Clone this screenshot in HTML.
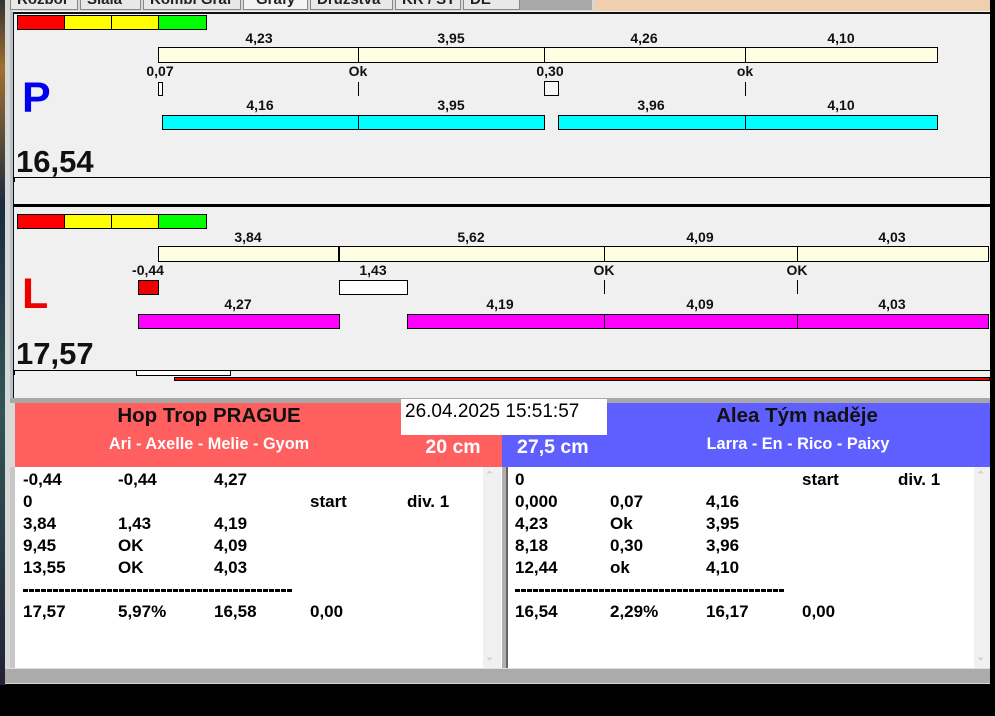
<!DOCTYPE html>
<html><head><meta charset="utf-8"><style>
*{margin:0;padding:0;box-sizing:border-box}
body{width:995px;height:716px;background:#000;position:relative;overflow:hidden;font-family:"Liberation Sans",Arial,sans-serif}
.a{position:absolute}
.t{position:absolute;font-weight:bold;font-size:14px;color:#111;transform:translateX(-50%);white-space:nowrap;line-height:14px}
.tab{position:absolute;top:0;height:10px;background:#e8e8e8;border:1px solid #888;border-top:none;overflow:hidden}
.tab span{position:absolute;top:-9px;left:6px;font-weight:bold;font-size:15px;color:#222;white-space:nowrap}
.bx{position:absolute;border:1px solid #000}
.l{position:absolute;font-weight:bold;font-size:17px;color:#000;line-height:20px;white-space:nowrap}
.d{position:absolute;height:3px;background:repeating-linear-gradient(90deg,#000 0 5px,transparent 5px 6px)}
</style></head><body>
<div class="a" style="left:0;top:0;width:6px;height:685px;background:linear-gradient(#333,#a07030 10%,#1a2a40 30%,#355 60%,#223)"></div>
<div class="a" style="left:5px;top:0;width:985px;height:684px;background:#d8d8d8"></div>
<!-- tabs -->
<div class="a" style="left:595px;top:0;width:395px;height:11px;background:#f0cfae"></div>
<div class="a" style="left:520px;top:0;width:72px;height:10px;background:#a8a8a8"></div>
<div class="tab" style="left:10px;width:68px"><span>Rozbor</span></div>
<div class="tab" style="left:80px;width:61px"><span>Síala</span></div>
<div class="tab" style="left:143px;width:98px"><span>Kombi Graf</span></div>
<div class="tab" style="left:243px;width:65px;background:#f4f4f4"><span style="left:12px">Grafy</span></div>
<div class="tab" style="left:310px;width:83px"><span>Družstva</span></div>
<div class="tab" style="left:395px;width:66px"><span>KR / ST</span></div>
<div class="tab" style="left:463px;width:57px"><span>DE</span></div>
<!-- main graph area -->
<div class="a" style="left:10px;top:11px;width:980px;height:390px;background:#f0f0f0;border-left:3px solid #b8c0c8"></div>
<div class="a" style="left:13px;top:12px;width:977px;height:2px;background:#111"></div>
<div class="a" style="left:13px;top:12px;width:1px;height:388px;background:#111"></div>

<!-- P panel -->
<div class="bx" style="left:17px;top:15px;width:48px;height:15px;background:#f00"></div>
<div class="bx" style="left:64px;top:15px;width:48px;height:15px;background:#ff0"></div>
<div class="bx" style="left:111px;top:15px;width:48px;height:15px;background:#ff0"></div>
<div class="bx" style="left:158px;top:15px;width:49px;height:15px;background:#0f0"></div>
<div class="t" style="left:259px;top:31px">4,23</div>
<div class="t" style="left:451px;top:31px">3,95</div>
<div class="t" style="left:644px;top:31px">4,26</div>
<div class="t" style="left:841px;top:31px">4,10</div>
<div class="bx" style="left:158px;top:47px;width:780px;height:16px;background:#fefee2"></div>
<div class="a" style="left:358px;top:47px;width:1px;height:16px;background:#000"></div>
<div class="a" style="left:544px;top:47px;width:1px;height:16px;background:#000"></div>
<div class="a" style="left:745px;top:47px;width:1px;height:16px;background:#000"></div>
<div class="t" style="left:160px;top:64px">0,07</div>
<div class="t" style="left:358px;top:64px">Ok</div>
<div class="t" style="left:550px;top:64px">0,30</div>
<div class="t" style="left:745px;top:64px">ok</div>
<div class="bx" style="left:158px;top:82px;width:5px;height:14px;background:#fff"></div>
<div class="a" style="left:358px;top:82px;width:1px;height:14px;background:#000"></div>
<div class="bx" style="left:544px;top:81px;width:15px;height:15px;background:#f8f8f8"></div>
<div class="a" style="left:745px;top:82px;width:1px;height:14px;background:#000"></div>
<div class="t" style="left:260px;top:98px">4,16</div>
<div class="t" style="left:451px;top:98px">3,95</div>
<div class="t" style="left:651px;top:98px">3,96</div>
<div class="t" style="left:841px;top:98px">4,10</div>
<div class="bx" style="left:162px;top:115px;width:383px;height:15px;background:#0ff"></div>
<div class="a" style="left:358px;top:115px;width:1px;height:15px;background:#000"></div>
<div class="bx" style="left:558px;top:115px;width:380px;height:15px;background:#0ff"></div>
<div class="a" style="left:745px;top:115px;width:1px;height:15px;background:#000"></div>
<div class="a" style="left:22px;top:76px;font-size:43px;font-weight:bold;color:#00e;line-height:44px">P</div>
<div class="a" style="left:16px;top:145px;font-size:31px;font-weight:bold;color:#111;line-height:34px">16,54</div>
<div class="a" style="left:13px;top:177px;width:977px;height:1px;background:#000"></div>
<div class="a" style="left:14px;top:177px;width:1px;height:5px;background:#000"></div>
<div class="a" style="left:13px;top:204px;width:977px;height:3px;background:#000"></div>

<!-- L panel -->
<div class="bx" style="left:17px;top:214px;width:48px;height:15px;background:#f00"></div>
<div class="bx" style="left:64px;top:214px;width:48px;height:15px;background:#ff0"></div>
<div class="bx" style="left:111px;top:214px;width:48px;height:15px;background:#ff0"></div>
<div class="bx" style="left:158px;top:214px;width:49px;height:15px;background:#0f0"></div>
<div class="t" style="left:248px;top:230px">3,84</div>
<div class="t" style="left:471px;top:230px">5,62</div>
<div class="t" style="left:700px;top:230px">4,09</div>
<div class="t" style="left:892px;top:230px">4,03</div>
<div class="bx" style="left:158px;top:246px;width:831px;height:16px;background:#fefee2"></div>
<div class="a" style="left:338px;top:246px;width:2px;height:16px;background:#000"></div>
<div class="a" style="left:604px;top:246px;width:1px;height:16px;background:#000"></div>
<div class="a" style="left:797px;top:246px;width:1px;height:16px;background:#000"></div>
<div class="t" style="left:148px;top:263px">-0,44</div>
<div class="t" style="left:373px;top:263px">1,43</div>
<div class="t" style="left:604px;top:263px">OK</div>
<div class="t" style="left:797px;top:263px">OK</div>
<div class="bx" style="left:138px;top:280px;width:21px;height:15px;background:#e00"></div>
<div class="bx" style="left:339px;top:280px;width:69px;height:15px;background:#fff"></div>
<div class="a" style="left:604px;top:280px;width:1px;height:14px;background:#000"></div>
<div class="a" style="left:797px;top:280px;width:1px;height:14px;background:#000"></div>
<div class="t" style="left:238px;top:297px">4,27</div>
<div class="t" style="left:500px;top:297px">4,19</div>
<div class="t" style="left:700px;top:297px">4,09</div>
<div class="t" style="left:892px;top:297px">4,03</div>
<div class="bx" style="left:138px;top:314px;width:202px;height:15px;background:#f0f"></div>
<div class="bx" style="left:407px;top:314px;width:582px;height:15px;background:#f0f"></div>
<div class="a" style="left:604px;top:314px;width:1px;height:15px;background:#000"></div>
<div class="a" style="left:797px;top:314px;width:1px;height:15px;background:#000"></div>
<div class="a" style="left:22px;top:272px;font-size:43px;font-weight:bold;color:#e00;line-height:44px">L</div>
<div class="a" style="left:16px;top:337px;font-size:31px;font-weight:bold;color:#111;line-height:34px">17,57</div>
<div class="a" style="left:13px;top:370px;width:977px;height:1px;background:#000"></div>
<div class="a" style="left:14px;top:370px;width:1px;height:5px;background:#000"></div>
<div class="bx" style="left:136px;top:370px;width:95px;height:6px;background:#fff"></div>
<div class="bx" style="left:174px;top:377px;width:816px;height:4px;background:#e00"></div>

<!-- headers -->
<div class="a" style="left:10px;top:398px;width:980px;height:5px;background:#a8a8a8"></div>
<div class="a" style="left:15px;top:403px;width:487px;height:64px;background:#ff5f5f"></div>
<div class="a" style="left:502px;top:403px;width:488px;height:64px;background:#5f5fff"></div>
<div class="a" style="left:401px;top:399px;width:206px;height:36px;background:#fff"></div>
<div class="a" style="left:405px;top:401px;font-size:19px;line-height:22px;color:#000">26.04.2025 15:51:57</div>
<div class="t" style="left:209px;top:405px;font-size:20.5px;line-height:22px">Hop Trop PRAGUE</div>
<div class="t" style="left:209px;top:435px;font-size:16.3px;line-height:18px;color:#fff">Ari - Axelle - Melie - Gyom</div>
<div class="t" style="left:453px;top:436px;font-size:19.5px;line-height:22px;color:#fff">20 cm</div>
<div class="a" style="left:517px;top:436px;font-size:19.5px;line-height:22px;color:#fff;font-weight:bold">27,5 cm</div>
<div class="t" style="left:797px;top:405px;font-size:20.5px;line-height:22px">Alea Tým naděje</div>
<div class="t" style="left:798px;top:435px;font-size:16.3px;line-height:18px;color:#fff">Larra - En - Rico - Paixy</div>

<!-- lists -->
<div class="a" style="left:10px;top:467px;width:5px;height:203px;background:#c8c8c8"></div>
<div class="a" style="left:15px;top:467px;width:487px;height:201px;background:#fff"></div>
<div class="a" style="left:483px;top:467px;width:18px;height:201px;background:#f0f0f0"></div>
<div class="a" style="left:485px;top:469px;font-size:11px;color:#bbb">&#8963;</div>
<div class="a" style="left:485px;top:650px;font-size:11px;color:#bbb">&#8964;</div>
<div class="a" style="left:502px;top:467px;width:6px;height:201px;background:#b0b0b0;border-right:2px solid #666"></div>
<div class="a" style="left:508px;top:467px;width:482px;height:201px;background:#fff"></div>
<div class="a" style="left:974px;top:467px;width:16px;height:201px;background:#f0f0f0"></div>
<div class="a" style="left:976px;top:469px;font-size:11px;color:#bbb">&#8963;</div>
<div class="a" style="left:976px;top:650px;font-size:11px;color:#bbb">&#8964;</div>
<div class="a" style="left:5px;top:668px;width:985px;height:15px;background:#ababab;border-top:1px solid #ddd"></div>

<div class="l" style="left:23px;top:470px">-0,44</div><div class="l" style="left:118px;top:470px">-0,44</div><div class="l" style="left:214px;top:470px">4,27</div>
<div class="l" style="left:23px;top:492px">0</div><div class="l" style="left:310px;top:492px">start</div><div class="l" style="left:407px;top:492px">div. 1</div>
<div class="l" style="left:23px;top:514px">3,84</div><div class="l" style="left:118px;top:514px">1,43</div><div class="l" style="left:214px;top:514px">4,19</div>
<div class="l" style="left:23px;top:536px">9,45</div><div class="l" style="left:118px;top:536px">OK</div><div class="l" style="left:214px;top:536px">4,09</div>
<div class="l" style="left:23px;top:558px">13,55</div><div class="l" style="left:118px;top:558px">OK</div><div class="l" style="left:214px;top:558px">4,03</div>
<div class="d" style="left:23px;top:589px;width:270px"></div>
<div class="l" style="left:23px;top:602px">17,57</div><div class="l" style="left:118px;top:602px">5,97%</div><div class="l" style="left:214px;top:602px">16,58</div><div class="l" style="left:310px;top:602px">0,00</div>

<div class="l" style="left:515px;top:470px">0</div><div class="l" style="left:802px;top:470px">start</div><div class="l" style="left:898px;top:470px">div. 1</div>
<div class="l" style="left:515px;top:492px">0,000</div><div class="l" style="left:610px;top:492px">0,07</div><div class="l" style="left:706px;top:492px">4,16</div>
<div class="l" style="left:515px;top:514px">4,23</div><div class="l" style="left:610px;top:514px">Ok</div><div class="l" style="left:706px;top:514px">3,95</div>
<div class="l" style="left:515px;top:536px">8,18</div><div class="l" style="left:610px;top:536px">0,30</div><div class="l" style="left:706px;top:536px">3,96</div>
<div class="l" style="left:515px;top:558px">12,44</div><div class="l" style="left:610px;top:558px">ok</div><div class="l" style="left:706px;top:558px">4,10</div>
<div class="d" style="left:515px;top:589px;width:270px"></div>
<div class="l" style="left:515px;top:602px">16,54</div><div class="l" style="left:610px;top:602px">2,29%</div><div class="l" style="left:706px;top:602px">16,17</div><div class="l" style="left:802px;top:602px">0,00</div>
</body></html>
